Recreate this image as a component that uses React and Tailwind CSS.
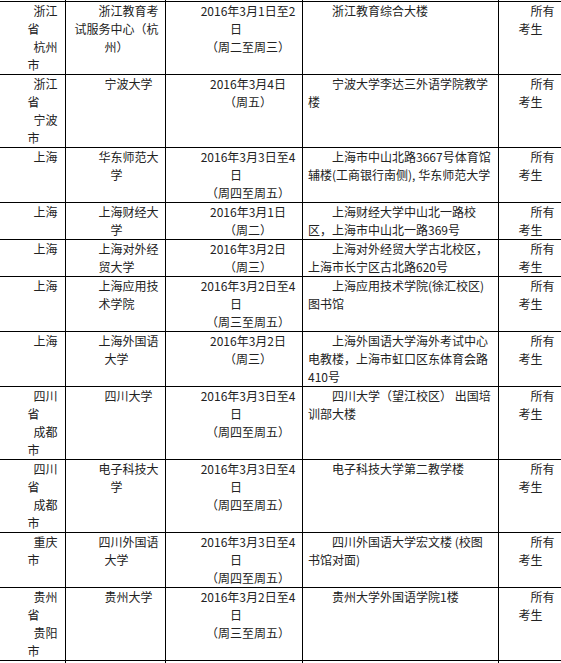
import React from "react"

// Each line: [text, indented?]
const rows = [
    {
        city: [["浙江", 1], ["省"], ["杭州", 1], ["市"]],
        center: [["浙江教育考", 1], ["试服务中心（杭"], ["州）"]],
        date: [["2016年3月1日至2", 1], ["日"], ["（周二至周三）", 1]],
        addr: [["浙江教育综合大楼", 1]],
    },
    {
        city: [["浙江", 1], ["省"], ["宁波", 1], ["市"]],
        center: [["宁波大学", 1]],
        date: [["2016年3月4日", 1], ["（周五）", 1]],
        addr: [["宁波大学李达三外语学院教学", 1], ["楼"]],
    },
    {
        city: [["上海", 1]],
        center: [["华东师范大", 1], ["学"]],
        date: [["2016年3月3日至4", 1], ["日"], ["（周四至周五）", 1]],
        addr: [["上海市中山北路3667号体育馆", 1], ["辅楼(工商银行南侧), 华东师范大学"]],
    },
    {
        city: [["上海", 1]],
        center: [["上海财经大", 1], ["学"]],
        date: [["2016年3月1日", 1], ["（周二）", 1]],
        addr: [["上海财经大学中山北一路校", 1], ["区，上海市中山北一路369号"]],
    },
    {
        city: [["上海", 1]],
        center: [["上海对外经", 1], ["贸大学"]],
        date: [["2016年3月2日", 1], ["（周三）", 1]],
        addr: [["上海对外经贸大学古北校区，", 1], ["上海市长宁区古北路620号"]],
    },
    {
        city: [["上海", 1]],
        center: [["上海应用技", 1], ["术学院"]],
        date: [["2016年3月2日至4", 1], ["日"], ["（周三至周五）", 1]],
        addr: [["上海应用技术学院(徐汇校区)", 1], ["图书馆"]],
    },
    {
        city: [["上海", 1]],
        center: [["上海外国语", 1], ["大学"]],
        date: [["2016年3月2日", 1], ["（周三）", 1]],
        addr: [["上海外国语大学海外考试中心", 1], ["电教楼，上海市虹口区东体育会路"], ["410号"]],
    },
    {
        city: [["四川", 1], ["省"], ["成都", 1], ["市"]],
        center: [["四川大学", 1]],
        date: [["2016年3月3日至4", 1], ["日"], ["（周四至周五）", 1]],
        addr: [["四川大学（望江校区） 出国培", 1], ["训部大楼"]],
    },
    {
        city: [["四川", 1], ["省"], ["成都", 1], ["市"]],
        center: [["电子科技大", 1], ["学"]],
        date: [["2016年3月3日至4", 1], ["日"], ["（周四至周五）", 1]],
        addr: [["电子科技大学第二教学楼", 1]],
    },
    {
        city: [["重庆", 1], ["市"]],
        center: [["四川外国语", 1], ["大学"]],
        date: [["2016年3月3日至4", 1], ["日"], ["（周四至周五）", 1]],
        addr: [["四川外国语大学宏文楼 (校图", 1], ["书馆对面)"]],
    },
    {
        city: [["贵州", 1], ["省"], ["贵阳", 1], ["市"]],
        center: [["贵州大学", 1]],
        date: [["2016年3月2日至4", 1], ["日"], ["（周三至周五）", 1]],
        addr: [["贵州大学外国语学院1楼", 1]],
    },
]

const scope = [["所有", 1], ["考生"]]

function Lines({ lines, align }) {
    return lines.map(([text, ind], i) => (
        <div
            key={i}
            className={`h-[18px] leading-[18px] whitespace-nowrap ${align} ${ind ? "indent-6" : ""}`}
        >
            {text}
        </div>
    ))
}

export default function App() {
    const cell = "border-r border-b border-black"
    return (
        <div
            className="w-[561px] h-[663px] overflow-hidden bg-white text-[12px] text-[#222]"
            style={{ fontFamily: '"Microsoft YaHei", "Noto Sans CJK SC", sans-serif' }}
        >
            <div className="grid w-[563px] grid-cols-[66px_100px_137px_196px_64px]">
                {/* tail of the previous row */}
                {[0, 1, 2, 3, 4].map((i) => (
                    <div key={i} className={`h-[2px] ${cell}`}></div>
                ))}

                {rows.map((r, i) => (
                    <React.Fragment key={i}>
                        <div className={`${cell} pl-2 pr-1.5`}>
                            <Lines lines={r.city} align="text-center" />
                        </div>
                        <div className={`${cell} pl-2 pr-1.5`}>
                            <Lines lines={r.center} align="text-center" />
                        </div>
                        <div className={`${cell} pl-[10px] pr-1.5`}>
                            <Lines lines={r.date} align="text-center" />
                        </div>
                        <div className={`${cell} pl-[5px] pr-1`}>
                            <Lines lines={r.addr} align="text-left" />
                        </div>
                        <div className={`${cell} pl-1.5 pr-1.5`}>
                            <Lines lines={scope} align="text-center" />
                        </div>
                    </React.Fragment>
                ))}

                {/* start of the next row */}
                {[0, 1, 2, 3, 4].map((i) => (
                    <div key={"n" + i} className="h-5 border-r border-black"></div>
                ))}
            </div>
        </div>
    )
}
